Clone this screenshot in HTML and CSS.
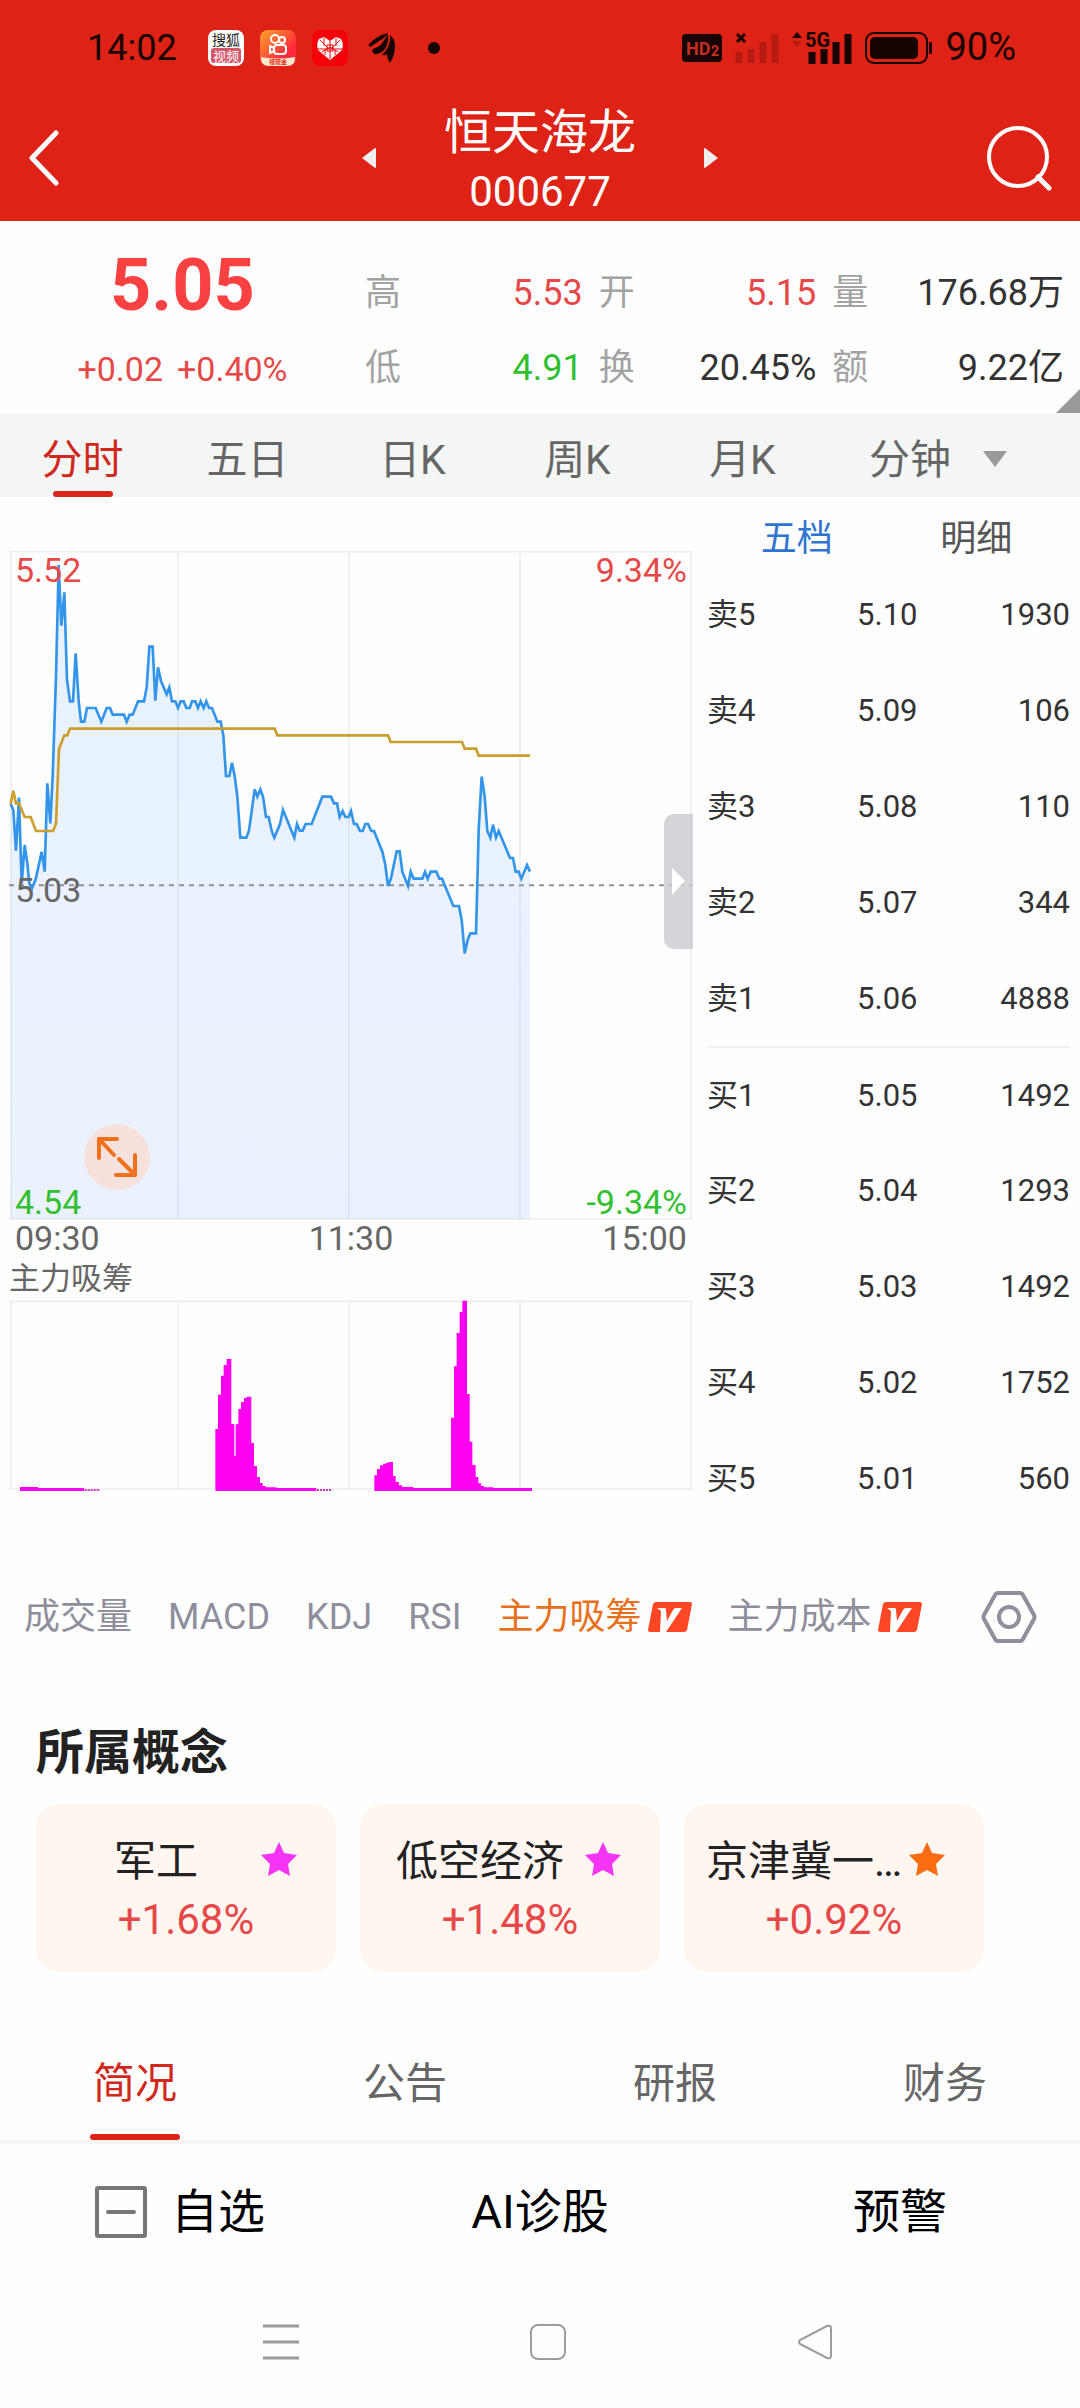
FILE: index.html
```html
<!DOCTYPE html>
<html lang="zh-CN">
<head>
    <meta charset="UTF-8">
    <meta name="viewport" content="width=device-width, initial-scale=1.0">
    <title>恒天海龙 000677</title>
    <link rel="stylesheet" href="styles.css">
</head>
<body>
    <header class="top">
        <!-- Status bar -->
        <div class="status-bar">
            <div class="status-left">
                <span class="clock">14:02</span>
                <svg class="app-icon" viewBox="0 0 36 36">
                    <rect width="36" height="36" rx="8" fill="#fff"/>
                    <rect x="3" y="18" width="30" height="15" rx="3" fill="#d3566a"/>
                    <text x="18" y="15" text-anchor="middle" font-size="14" fill="#222">搜狐</text>
                    <text x="18" y="31" text-anchor="middle" font-size="13" fill="#fff">视频</text>
                </svg>
                <svg class="app-icon" viewBox="0 0 36 36">
                    <defs>
                        <linearGradient id="orange" x1="0" y1="0" x2="1" y2="1">
                            <stop offset="0" stop-color="#ffa62b"/>
                            <stop offset="0.7" stop-color="#ff2a3c"/>
                        </linearGradient>
                    </defs>
                    <rect width="36" height="36" rx="8" fill="url(#orange)"/>
                    <g fill="none" stroke="#fff" stroke-width="2">
                        <circle cx="15" cy="9" r="4"/>
                        <circle cx="22" cy="10" r="3"/>
                        <rect x="14" y="15" width="12" height="9" rx="3"/>
                        <path d="M14 18l-4-2v7l4-2"/>
                    </g>
                    <path d="M1 27q17 3 34 0v1q0 8-8 8H9q-8 0-8-8z" fill="#fde8cd"/>
                    <text x="18" y="34" text-anchor="middle" font-size="6" font-weight="bold" fill="#e02a1c">领现金</text>
                </svg>
                <svg class="app-icon" viewBox="0 0 36 36">
                    <rect width="36" height="36" rx="8" fill="#f60009"/>
                    <path d="M18 30L6 20q-2-6 1-11l5-2 6 4 6-4 5 2q3 5 1 11z" fill="#fff"/>
                    <path d="M5 19h26M18 11v18M8 10l9 9M28 10l-9 9M10 22l8-5 8 5M12 8v8M24 8v8M13 25v-5M23 25v-5M15 15h6v6h-6z" stroke="#f60009" stroke-width="1" fill="none"/>
                </svg>
                <svg class="bird-icon" viewBox="0 0 28 32">
                    <path d="M1 12Q8 4 20 1q-3 5-9 8-4 3-9 6-2-1-1-3zM5 17q7-2 10-7 3-5 5-8 1 9-3 15-5 6-11 5l-2-3zM14 23q9-8 8-20 5 4 5 11 0 9-5 17-3-4-3-9-2 2-5 1z" fill="#170300"/>
                </svg>
                <span class="dot"></span>
            </div>
            <div class="status-right">
                <svg width="40" height="28" viewBox="0 0 40 28">
                    <rect width="40" height="28" rx="4" fill="#170300"/>
                    <text x="4" y="21" font-size="18" font-weight="bold" fill="#c72d20">HD</text>
                    <text x="29" y="22" font-size="14" font-weight="bold" fill="#c72d20">2</text>
                </svg>
                <svg width="44" height="32" viewBox="0 0 44 32">
                    <path d="M2 2l8 8M10 2l-8 8" stroke="#170300" stroke-width="3"/>
                    <path d="M4 20v11M16 17v14M28 10v21M40 2v29" stroke="#b51b12" stroke-width="7"/>
                </svg>
                <svg width="60" height="44" viewBox="0 -6 60 44">
                    <path d="M0 6l5-6 5 6z" fill="#170300"/>
                    <path d="M0 9l5 6 5-6z" fill="#b51b12"/>
                    <path d="M20 20v12M32 17v15M44 10v22M56 2v30" stroke="#170300" stroke-width="7"/>
                    <text x="13" y="15" font-size="20" font-weight="bold" fill="#170300" stroke="#de2216" stroke-width="3" paint-order="stroke">5G</text>
                </svg>
                <svg width="67" height="32" viewBox="0 0 67 32">
                    <rect x="1" y="1" width="61" height="30" rx="8" fill="none" stroke="#170300" stroke-width="2"/>
                    <rect x="5" y="5" width="48" height="22" rx="5" fill="#170300"/>
                    <rect x="64" y="10" width="3" height="12" rx="1" fill="#170300"/>
                </svg>
                <span class="battery-text">90%</span>
            </div>
        </div>

        <!-- Stock title -->
        <div class="title-bar">
            <button class="icon-button" aria-label="返回">
                <svg width="32" height="56" viewBox="0 0 32 56"><path d="M28 3L4 28l24 25" fill="none" stroke="#fff" stroke-width="5" stroke-linecap="round" stroke-linejoin="round"/></svg>
            </button>
            <div class="stock-switch">
                <button class="icon-button" aria-label="上一只">
                    <svg width="14" height="20" viewBox="0 0 14 20"><path d="M14 1v18q0 1-1 1L0 10 13 0q1 0 1 1z" fill="#f0eeee"/></svg>
                </button>
                <h1 class="stock-name">恒天海龙<span class="stock-code">000677</span></h1>
                <button class="icon-button" aria-label="下一只">
                    <svg width="14" height="20" viewBox="0 0 14 20"><path d="M0 1v18q0 1 1 1l13-10L1 0Q0 0 0 1z" fill="#f0eeee"/></svg>
                </button>
            </div>
            <button class="icon-button search" aria-label="搜索">
                <svg width="66" height="66" viewBox="0 0 66 66"><circle cx="32" cy="32" r="29" fill="none" stroke="#fff" stroke-width="4"/><path d="M52 52l11 11" stroke="#fff" stroke-width="5" stroke-linecap="round"/></svg>
            </button>
        </div>
    </header>

    <!-- Price summary -->
    <section class="quote">
        <div class="quote-price">
            <div class="price">5.05</div>
            <div class="change"><span>+0.02</span><span>+0.40%</span></div>
        </div>
        <dl class="stats">
            <div><dt>高</dt><dd class="up">5.53</dd></div>
            <div><dt>开</dt><dd class="up">5.15</dd></div>
            <div><dt>量</dt><dd>176.68万</dd></div>
            <div><dt>低</dt><dd class="down">4.91</dd></div>
            <div><dt>换</dt><dd>20.45%</dd></div>
            <div><dt>额</dt><dd>9.22亿</dd></div>
        </dl>
    </section>

    <nav class="period-tabs">
        <button class="active">分时</button>
        <button>五日</button>
        <button>日K</button>
        <button>周K</button>
        <button>月K</button>
        <label class="minute">
            <select aria-label="分钟周期">
                <option>分钟</option>
            </select>
            <svg width="24" height="16" viewBox="0 0 24 16"><path d="M0 0h24L12 16z" fill="#999"/></svg>
        </label>
    </nav>

    <main class="market">
        <section class="charts">
            <!-- Intraday price chart, three units to a pixel -->
            <div class="price-chart">
                <svg viewBox="27 63 2052 2007">
                    <defs>
                        <linearGradient id="area" x1="0" y1="0" x2="0" y2="1">
                            <stop offset="0" stop-color="#1e8cff"/>
                            <stop offset="1" stop-color="#3c82ff"/>
                        </linearGradient>
                    </defs>
                    <path d="M27 65H2079M27 2067H2079M33 65V2067M534 65V2067M1047 65V2067M1560 65V2067M2073 65V2067" stroke="#ededed" stroke-width="5" fill="none"/>
                    <path class="area" d="M32 822L40 840 48 962 57 803 65 1060 74 945 82 1000 88 1060 96 1075 107 1048 125 965 134 1025 142 760 151 880 158 740 168 440 176 105 184 287 193 187 201 450 210 514H219L227 370 236 514 243 575H253L261 534H287L304 575 320 534H330L338 554H372L380 575 389 554H398L414 514H432L440 473 448 350H458L466 512 474 412 483 453 500 493 508 472 516 514H526L534 534 542 514H551L559 534H569L576 514H586L594 534 602 514 611 534 619 514 627 534H636L652 575H662L670 616 678 738H688L696 698 704 738 712 800 721 923H739L747 902 764 778 772 800 781 778 789 800 798 861H806L815 902 823 923 840 882 849 840 883 923 891 882 899 902H908L917 882H935L967 800H993L1002 820H1011L1019 861 1028 843 1036 861H1046L1053 843 1062 882H1070L1080 903H1088L1096 882H1104L1114 903H1122L1147 965 1156 1005 1164 1068 1173 1045 1190 964H1199L1207 1025 1224 1068 1232 1025 1241 1046H1267L1275 1025 1283 1046 1292 1025H1309L1318 1046H1326L1360 1128H1377L1385 1170 1394 1270 1403 1230 1411 1210H1428L1432 1060 1436 900 1445 740 1454 800 1462 903 1471 923 1479 884 1488 923 1496 903 1530 984H1539L1547 1025H1556L1564 1046 1581 1005 1590 1025V2067H32z"/>
                    <path d="M27 1066H2079" stroke="#8f9299" stroke-width="6" stroke-dasharray="15 15" fill="none"/>
                    <path class="price-line" d="M32 822L40 840 48 962 57 803 65 1060 74 945 82 1000 88 1060 96 1075 107 1048 125 965 134 1025 142 760 151 880 158 740 168 440 176 105 184 287 193 187 201 450 210 514H219L227 370 236 514 243 575H253L261 534H287L304 575 320 534H330L338 554H372L380 575 389 554H398L414 514H432L440 473 448 350H458L466 512 474 412 483 453 500 493 508 472 516 514H526L534 534 542 514H551L559 534H569L576 514H586L594 534 602 514 611 534 619 514 627 534H636L652 575H662L670 616 678 738H688L696 698 704 738 712 800 721 923H739L747 902 764 778 772 800 781 778 789 800 798 861H806L815 902 823 923 840 882 849 840 883 923 891 882 899 902H908L917 882H935L967 800H993L1002 820H1011L1019 861 1028 843 1036 861H1046L1053 843 1062 882H1070L1080 903H1088L1096 882H1104L1114 903H1122L1147 965 1156 1005 1164 1068 1173 1045 1190 964H1199L1207 1025 1224 1068 1232 1025 1241 1046H1267L1275 1025 1283 1046 1292 1025H1309L1318 1046H1326L1360 1128H1377L1385 1170 1394 1270 1403 1230 1411 1210H1428L1432 1060 1436 900 1445 740 1454 800 1462 903 1471 923 1479 884 1488 923 1496 903 1530 984H1539L1547 1025H1556L1564 1046 1581 1005 1590 1025"/>
                    <path class="average-line" d="M32 822L40 782 48 820H57L74 861H92L108 903H159L168 882 177 657 193 616H202L210 596H824L832 616H1164L1172 636H1386L1394 656H1428L1436 677H1590"/>
                </svg>
                <span class="chart-label high up">5.52</span>
                <span class="chart-label high right up">9.34%</span>
                <span class="chart-label middle">5.03</span>
                <span class="chart-label low down">4.54</span>
                <span class="chart-label low right down">-9.34%</span>
                <button class="expand" aria-label="全屏">
                    <svg width="40" height="40" viewBox="0 0 40 40"><path d="M2 21V2h18M2 2l15 16M38 18v20H19M38 38L22 22" fill="none" stroke="#f0701c" stroke-width="4" stroke-linecap="round" stroke-linejoin="round"/></svg>
                </button>
                <button class="drawer" aria-label="收起盘口">
                    <svg width="13" height="27" viewBox="0 0 13 27"><path d="M0 0l13 13L0 27z" fill="#fff"/></svg>
                </button>
            </div>
            <div class="times"><span>09:30</span><span>11:30</span><span>15:00</span></div>
            <h2 class="indicator-name">主力吸筹</h2>
            <svg class="volume-chart" viewBox="27 30 2052 576">
                <path d="M27 34H2079M27 597H2079M33 34V597M534 34V597M1047 34V597M1560 34V597M2073 34V597" stroke="#ededed" stroke-width="5" fill="none"/>
                <path d="M60 603V591H115V594H252V603zM646 603V417H654V314H663V257H671V225H680V207H694V402H703V498H707V403H715V357H723V336H732V324H740V320H754V459H762V528H771V561H780V579H788V588H797V592H830V594H949V603zM1123 603V556H1131V537H1140V526H1149V521H1158V518H1166V516H1179V558H1187V576H1197V586H1206V591H1240V594H1353V383H1362V229H1370V129H1379V66H1387V32H1401V312H1409V455H1417V525H1427V561H1435V580H1443V588H1452V592H1480V594H1596V603z" fill="#ff00f0"/>
                <path d="M254 600H300M951 600H997" stroke="#cc33bb" stroke-width="6" stroke-dasharray="6 3"/>
            </svg>
        </section>

        <!-- Order book -->
        <aside class="book">
            <div class="book-tabs">
                <button class="active">五档</button>
                <button>明细</button>
            </div>
            <table class="orders">
                <tbody class="sell">
                    <tr><th>卖5</th><td class="order-price">5.10</td><td>1930</td></tr>
                    <tr><th>卖4</th><td class="order-price">5.09</td><td>106</td></tr>
                    <tr><th>卖3</th><td class="order-price">5.08</td><td>110</td></tr>
                    <tr><th>卖2</th><td class="order-price">5.07</td><td>344</td></tr>
                    <tr><th>卖1</th><td class="order-price">5.06</td><td>4888</td></tr>
                </tbody>
                <tbody class="buy">
                    <tr><th>买1</th><td class="order-price">5.05</td><td>1492</td></tr>
                    <tr><th>买2</th><td class="order-price">5.04</td><td>1293</td></tr>
                    <tr><th>买3</th><td class="order-price">5.03</td><td>1492</td></tr>
                    <tr><th>买4</th><td class="order-price">5.02</td><td>1752</td></tr>
                    <tr><th>买5</th><td class="order-price">5.01</td><td>560</td></tr>
                </tbody>
            </table>
        </aside>
    </main>

    <nav class="indicators">
        <button>成交量</button>
        <button>MACD</button>
        <button>KDJ</button>
        <button>RSI</button>
        <button class="active">主力吸筹
            <svg width="44" height="30" viewBox="0 0 44 30"><path d="M8 0h34q2 0 2 2l-5 26q-1 2-3 2H2q-2 0-2-2L5 2q1-2 3-2z" fill="#ff4726"/><path d="M9 6h8q1 0 1 2l1 11 6-11q1-2 3-2h6L18 30h-6L13 9z" fill="#fff"/></svg>
        </button>
        <button>主力成本
            <svg width="44" height="30" viewBox="0 0 44 30"><path d="M8 0h34q2 0 2 2l-5 26q-1 2-3 2H2q-2 0-2-2L5 2q1-2 3-2z" fill="#ff4726"/><path d="M9 6h8q1 0 1 2l1 11 6-11q1-2 3-2h6L18 30h-6L13 9z" fill="#fff"/></svg>
        </button>
        <button class="settings" aria-label="指标设置">
            <svg width="56" height="54" viewBox="0 0 56 54"><path d="M17 3h22q2 0 3 2l11 20q1 2 0 4L42 49q-1 2-3 2H17q-2 0-3-2L3 29q-1-2 0-4L14 5q1-2 3-2z" fill="none" stroke="#8e8e9c" stroke-width="4"/><circle cx="28" cy="27" r="10" fill="none" stroke="#8e8e9c" stroke-width="4"/></svg>
        </button>
    </nav>

    <!-- Related concepts -->
    <section class="concepts">
        <h2>所属概念</h2>
        <div class="concept-list">
            <a class="concept" href="#">
                <span class="concept-name">军工</span>
                <svg class="star" viewBox="0 0 38 36"><path d="M19 1l5 11 13 2-9 9 2 12-11-6-11 6 2-12-9-9 13-2z"/></svg>
                <span class="concept-change">+1.68%</span>
            </a>
            <a class="concept" href="#">
                <span class="concept-name">低空经济</span>
                <svg class="star" viewBox="0 0 38 36"><path d="M19 1l5 11 13 2-9 9 2 12-11-6-11 6 2-12-9-9 13-2z"/></svg>
                <span class="concept-change">+1.48%</span>
            </a>
            <a class="concept" href="#">
                <span class="concept-name">京津冀一…</span>
                <svg class="star hot" viewBox="0 0 38 36"><path d="M19 1l5 11 13 2-9 9 2 12-11-6-11 6 2-12-9-9 13-2z"/></svg>
                <span class="concept-change">+0.92%</span>
            </a>
        </div>
    </section>

    <nav class="info-tabs">
        <button class="active">简况</button>
        <button>公告</button>
        <button>研报</button>
        <button>财务</button>
    </nav>

    <footer class="actions">
        <button>
            <svg width="52" height="52" viewBox="0 0 52 52"><rect x="2" y="2" width="48" height="48" rx="1" fill="none" stroke="#777" stroke-width="4"/><path d="M13 26h26" stroke="#777" stroke-width="4" stroke-linecap="round"/></svg>
            自选
        </button>
        <button>AI诊股</button>
        <button>预警</button>
    </footer>

    <!-- System navigation -->
    <nav class="system-nav">
        <button aria-label="最近任务"><svg width="36" height="36" viewBox="0 0 36 36"><path d="M0 2h36M0 18h36M0 34h36" stroke="#9c9c9c" stroke-width="3"/></svg></button>
        <button aria-label="主屏幕"><svg width="36" height="36" viewBox="0 0 36 36"><rect x="1" y="1" width="34" height="34" rx="7" fill="none" stroke="#9c9c9c" stroke-width="2"/></svg></button>
        <button aria-label="返回"><svg width="36" height="36" viewBox="0 0 36 36"><path d="M30 2L3 16q-2 2 0 4l27 14q4 1 4-2V4q0-3-4-2z" fill="none" stroke="#9c9c9c" stroke-width="2"/></svg></button>
    </nav>
</body>
</html>
```
FILE: styles.css
```css
* {
    box-sizing: border-box;
}

body {
    margin: 0;
    background-color: #fefefe;
    color: #333;
    font-family: Roboto, "Noto Sans CJK SC", sans-serif;
    font-size: 36px;
    line-height: 1.4;
}

button,
select {
    padding: 0;
    border: none;
    background: none;
    color: inherit;
    font: inherit;
    cursor: pointer;
}

svg {
    display: block;
}

h1,
h2,
dl,
dd {
    margin: 0;
}

.up {
    color: #e64848;
}

.down {
    color: #30c030;
}

/* Red header */
.top {
    background-color: #de2216;
}

.status-bar {
    display: flex;
    justify-content: space-between;
    height: 96px;
    padding: 0 64px 0 87px;
    color: #170300;
}

.status-left,
.status-right {
    display: flex;
    align-items: center;
}

.status-left {
    gap: 16px;
}

.status-right {
    gap: 13px;
}

.clock {
    margin-right: 15px;
}

.battery-text {
    font-size: 38px;
}

.app-icon {
    width: 36px;
    height: 36px;
}

.bird-icon {
    width: 28px;
    height: 32px;
    margin-left: 4px;
}

.dot {
    width: 12px;
    height: 12px;
    margin-left: 16px;
    border-radius: 50%;
    background-color: #170300;
}

.title-bar {
    display: grid;
    grid-template-columns: 1fr auto 1fr;
    align-items: center;
    height: 125px;
    padding: 0 28px 6px;
}

.icon-button {
    justify-self: start;
}

.search {
    justify-self: end;
}

.stock-switch {
    display: flex;
    align-items: center;
    gap: 68px;
}

.stock-name {
    padding-top: 6px;
    color: #fff;
    font-size: 48px;
    font-weight: normal;
    line-height: 62px;
    text-align: center;
}

.stock-code {
    display: block;
    font-size: 42px;
    line-height: 56px;
}

/* Price summary */
.quote {
    position: relative;
    display: flex;
    height: 192px;
    padding: 18px 16px 0 0;
}

.quote::after {
    content: "";
    position: absolute;
    right: 0;
    bottom: 0;
    width: 24px;
    height: 24px;
    background-color: #999;
    clip-path: polygon(100% 0, 100% 100%, 0 100%);
}

.quote-price {
    width: 34.3%;
    text-align: center;
}

.price {
    color: #f94141;
    font-size: 72px;
    font-weight: bold;
    line-height: 94px;
}

.change {
    display: flex;
    justify-content: center;
    gap: 14px;
    color: #e64848;
    font-size: 34px;
    line-height: 72px;
}

.stats {
    flex: 1;
    display: grid;
    grid-template-columns: 218fr 218fr 232fr;
    column-gap: 16px;
    grid-auto-rows: 75px;
    padding-top: 16px;
}

.stats div {
    display: flex;
    justify-content: space-between;
    line-height: 76px;
}

.stats dt {
    color: #a3a3a3;
}

/* Period tabs */
.period-tabs {
    display: grid;
    grid-template-columns: repeat(5, 165fr) 255fr;
    height: 84px;
    background-color: #f4f6f5;
    color: #666;
    font-size: 41px;
}

.period-tabs button {
    position: relative;
    padding-top: 12px;
}

.period-tabs .active {
    color: #d0281d;
}

.period-tabs .active::after {
    content: "";
    position: absolute;
    left: 50%;
    bottom: 0;
    width: 60px;
    height: 6px;
    margin-left: -30px;
    border-radius: 3px;
    background-color: #d8281b;
}

.minute {
    display: flex;
    align-items: center;
    gap: 32px;
    padding: 8px 0 0 44px;
}

.minute select {
    padding-top: 3px;
    appearance: none;
    outline: none;
}

/* Charts and order book */
.market {
    display: grid;
    grid-template-columns: 693fr 387fr;
}

.charts {
    padding: 54px 0 0 9px;
    color: #666;
    font-size: 34px;
}

.price-chart {
    position: relative;
}

.area {
    fill: url(#area);
    opacity: 0.1;
}

.price-line,
.average-line {
    fill: none;
    stroke: #3395ea;
    stroke-width: 8;
}

.average-line {
    stroke: #cc9e2e;
}

/* Labels lie over the chart */
.chart-label {
    position: absolute;
    left: 6px;
    line-height: 36px;
}

.chart-label.right {
    left: auto;
    right: 6px;
}

.high {
    top: 1px;
}

.middle {
    top: 48%;
}

.low {
    bottom: 0;
}

.expand {
    position: absolute;
    left: 75px;
    bottom: 30px;
    display: flex;
    align-items: center;
    justify-content: center;
    width: 66px;
    height: 66px;
    border-radius: 50%;
    background-color: #f6e1dd;
}

.drawer {
    position: absolute;
    right: 0;
    top: 263px;
    display: flex;
    align-items: center;
    justify-content: center;
    width: 29px;
    height: 135px;
    border-radius: 10px 0 0 10px;
    background-color: rgba(202, 201, 208, 0.8);
}

.times {
    display: flex;
    justify-content: space-between;
    padding: 0 6px;
    line-height: 37px;
}

.indicator-name {
    font-size: 31px;
    font-weight: normal;
    line-height: 43px;
}

.book {
    padding: 8px 10px 0 14px;
}

.book-tabs {
    display: grid;
    grid-template-columns: 1fr 1fr;
    height: 62px;
    padding: 6px 4px 0 0;
    color: #555;
}

.book-tabs .active {
    color: #2f74d0;
}

.orders {
    width: 100%;
    border-collapse: collapse;
    table-layout: fixed;
    font-size: 31px;
}

.orders tr {
    height: 96px;
}

.orders th,
.orders td {
    padding: 0;
    font-weight: normal;
    text-align: right;
}

.orders th {
    width: 30%;
    text-align: left;
}

.orders .order-price {
    width: 28%;
}

.buy {
    border-top: 2px solid #f1f1f1;
}

/* Indicator list */
.indicators {
    display: flex;
    align-items: center;
    gap: 36px;
    height: 72px;
    margin-top: 54px;
    padding: 0 43px 0 24px;
    color: #8e8e9c;
}

.indicators button {
    display: flex;
    align-items: center;
    gap: 6px;
    white-space: nowrap;
}

.indicators .active {
    color: #e8701c;
}

.indicators .settings {
    margin-left: auto;
}

/* Concepts */
.concepts {
    padding: 64px 36px 0;
}

.concepts h2 {
    color: #222;
    font-size: 48px;
    line-height: 72px;
}

.concept-list {
    display: flex;
    gap: 24px;
    margin-top: 15px;
}

.concept {
    display: grid;
    grid-template-columns: 196px 38px;
    column-gap: 6px;
    align-content: center;
    align-items: center;
    width: 300px;
    height: 168px;
    padding: 6px 0 0 22px;
    border-radius: 24px;
    background-color: #fff6f0;
    color: #222;
    font-size: 42px;
    line-height: 58px;
    text-align: center;
    text-decoration: none;
}

.concept-name {
    white-space: nowrap;
}

.star {
    width: 38px;
    height: 36px;
    margin-bottom: 6px;
    fill: #f535f5;
}

.star.hot {
    fill: #f96c12;
}

.concept-change {
    grid-column: 1 / -1;
    padding-left: 16px;
    color: #e64848;
}

/* Info tabs */
.info-tabs {
    display: grid;
    grid-template-columns: repeat(4, 1fr);
    height: 122px;
    margin-top: 50px;
    border-bottom: 4px solid #f5f5f5;
    color: #666;
    font-size: 42px;
}

.info-tabs button {
    position: relative;
    padding-top: 6px;
}

.info-tabs .active {
    color: #d0281d;
}

.info-tabs .active::after {
    content: "";
    position: absolute;
    left: 50%;
    bottom: 0;
    width: 90px;
    height: 6px;
    margin-left: -45px;
    border-radius: 3px;
    background-color: #de2216;
}

/* Bottom bar */
.actions {
    display: grid;
    grid-template-columns: repeat(3, 1fr);
    height: 132px;
    color: #000;
    font-size: 47px;
}

.actions button {
    display: flex;
    align-items: center;
    justify-content: center;
    gap: 24px;
    padding-top: 4px;
}

.system-nav {
    display: grid;
    grid-template-columns: repeat(3, 1fr);
    justify-items: center;
    height: 132px;
    padding: 0 132px 0 148px;
}
```
